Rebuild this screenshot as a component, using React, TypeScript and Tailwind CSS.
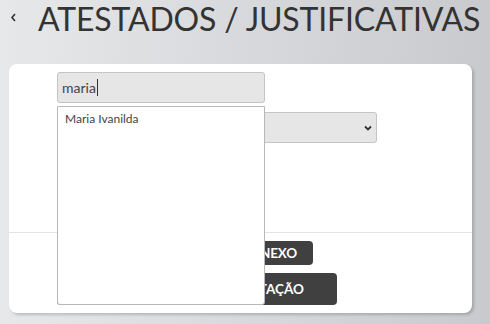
export default function App() {
  return (
    <div
      className="relative h-[324px] w-[490px] overflow-hidden bg-gradient-to-r from-[#e7e8ea] to-[#c9cacd] text-[#333]"
      style={{ fontFamily: "Lato, 'Noto Sans', sans-serif" }}
    >
      {/* header */}
      <div className="flex h-[64px] items-start pt-[1px]">
        <svg className="ml-[10px] mt-[12px]" width="7" height="9" viewBox="0 0 7 9">
          <path d="M5 1 L2 4.5 L5 8" fill="none" stroke="#333" strokeWidth="1.6" />
        </svg>
        <h1 className="ml-[21px] text-[32px] font-normal leading-[36px] tracking-[-0.17px] text-[#333]">
          ATESTADOS / JUSTIFICATIVAS
        </h1>
      </div>

      {/* card */}
      <div className="ml-[9px] h-[249px] w-[463px] rounded-[8px] bg-white shadow-[2px_2px_3px_rgba(0,0,0,0.18)]">
        <div className="h-[168px] pl-[48px] pt-[8px]">
          <div className="flex h-[31px] w-[208px] items-center rounded-[3px] border border-[#c4c4c4] bg-[#e6e6e6] px-[4px] text-[14px] text-[#444]">
            maria
            <span className="ml-[1px] h-[17px] w-[1px] bg-[#333]" />
          </div>
          <div className="mt-[9px] flex h-[31px] w-[320px] items-center justify-end rounded-[3px] border border-[#c4c4c4] bg-[#e6e6e6] pr-[4px]">
            <svg width="8" height="6" viewBox="0 0 8 6">
              <path d="M1 1.5 L4 4.5 L7 1.5" fill="none" stroke="#333" strokeWidth="1.8" />
            </svg>
          </div>
        </div>
        <div className="border-t border-[#e3e3e3]" />
        <div className="flex flex-col items-start gap-[8px] pl-[48px] pt-[8px]">
          <button className="flex h-[24px] w-[256px] items-center justify-end rounded-[4px] bg-[#404040] pr-[16px] text-[13.5px] font-bold tracking-[-0.2px] text-white">
            ADICIONAR ANEXO
          </button>
          <button className="flex h-[32px] w-[280px] items-center justify-end rounded-[4px] bg-[#404040] pr-[33px] text-[13.5px] font-bold text-white">
            SALVAR SOLICITAÇÃO
          </button>
        </div>
      </div>

      {/* autocomplete dropdown */}
      <div className="absolute left-[57px] top-[106px] h-[199px] w-[208px] rounded-b-[3px] border border-[#b8b8b8] bg-white px-[7px] pt-[3px] text-[12px] text-[#444]">
        Maria Ivanilda
      </div>
    </div>
  );
}
